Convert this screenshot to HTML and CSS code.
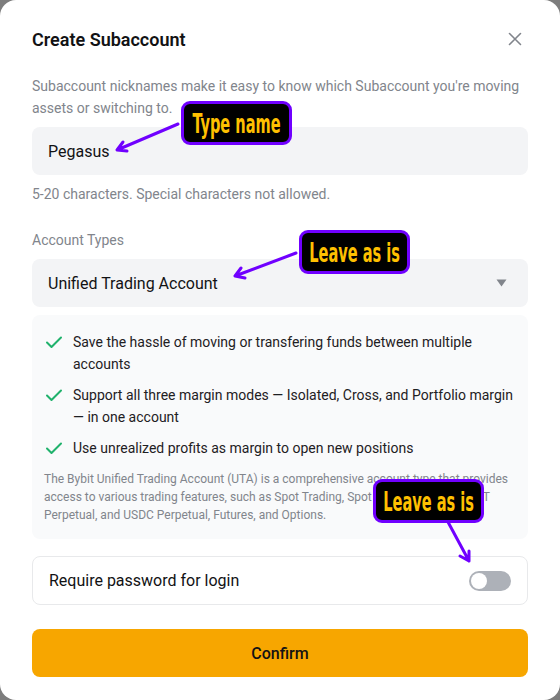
FILE: index.html
```html
<!DOCTYPE html>
<html lang="en">
<head>
    <meta charset="UTF-8">
    <meta name="viewport" content="width=device-width, initial-scale=1.0">
    <title>Create Subaccount</title>
    <link rel="stylesheet" href="styles.css">
</head>
<body>

<div class="modal">
    <div class="modal-head">
        <h2>Create Subaccount</h2>
        <svg class="close" width="14" height="14" viewBox="0 0 14 14">
            <path d="M1.5 1.5 L12.5 12.5 M12.5 1.5 L1.5 12.5" stroke="#81858c" stroke-width="1.6" stroke-linecap="round"/>
        </svg>
    </div>

    <p class="desc">Subaccount nicknames make it easy to know which Subaccount you're moving assets or switching to.</p>

    <div class="field">Pegasus</div>
    <p class="hint">5-20 characters. Special characters not allowed.</p>

    <p class="label">Account Types</p>
    <div class="field select">
        <span>Unified Trading Account</span>
        <svg width="11" height="8" viewBox="0 0 11 8">
            <path d="M0.5 0.5 H10.5 L5.5 7.5 Z" fill="#81858c"/>
        </svg>
    </div>

    <div class="info">
        <ul class="perks">
            <li>
                <svg class="check" width="18" height="18" viewBox="0 0 18 18">
                    <path d="M2 9.5 L6.5 14 L16 4.5" fill="none" stroke="#20b26c" stroke-width="2" stroke-linecap="round" stroke-linejoin="round"/>
                </svg>
                <span>Save the hassle of moving or transfering funds between multiple accounts</span>
            </li>
            <li>
                <svg class="check" width="18" height="18" viewBox="0 0 18 18">
                    <path d="M2 9.5 L6.5 14 L16 4.5" fill="none" stroke="#20b26c" stroke-width="2" stroke-linecap="round" stroke-linejoin="round"/>
                </svg>
                <span>Support all three margin modes — Isolated, Cross, and Portfolio margin — in one account</span>
            </li>
            <li>
                <svg class="check" width="18" height="18" viewBox="0 0 18 18">
                    <path d="M2 9.5 L6.5 14 L16 4.5" fill="none" stroke="#20b26c" stroke-width="2" stroke-linecap="round" stroke-linejoin="round"/>
                </svg>
                <span>Use unrealized profits as margin to open new positions</span>
            </li>
        </ul>
        <p class="note">The Bybit Unified Trading Account (UTA) is a comprehensive account type that provides access to various trading features, such as Spot Trading, Spot Margin Trading, USDT Perpetual, and USDC Perpetual, Futures, and Options.</p>
    </div>

    <div class="toggle-row">
        <span>Require password for login</span>
        <div class="switch"><div class="knob"></div></div>
    </div>

    <button class="confirm" type="button">Confirm</button>
</div>

<!-- annotations on top of the screenshot -->
<div class="tag tag-name"><span>Type name</span></div>
<div class="tag tag-type"><span>Leave as is</span></div>
<div class="tag tag-pass"><span>Leave as is</span></div>

<svg class="arrows" width="560" height="700" viewBox="0 0 560 700">
    <g fill="none" stroke="#7000ff" stroke-width="3" stroke-linecap="round" stroke-linejoin="round">
        <path d="M178 124 L117 150 M127 151 L117 150 L123 142"/>
        <path d="M296 253 L235 276 M245 278 L235 276 L241 268"/>
        <path d="M448 522 L469 561 M469 551 L469 561 L460 556"/>
    </g>
</svg>

</body>
</html>
```

FILE: styles.css
```css
body {
    margin: 0;
    background-color: #7d7d7d;
    font-family: Roboto, "Liberation Sans", sans-serif;
    color: #121214;
    position: relative;
}

.modal {
    background-color: #fff;
    border-radius: 16px;
    padding: 24px 32px 23px;
    display: flex;
    flex-direction: column;
}

.modal-head {
    height: 30px;
    display: flex;
    align-items: center;
    justify-content: space-between;
}

.modal-head h2 {
    margin: 0;
    font-size: 18px;
    font-weight: 600;
}

.close {
    margin-right: 6px;
}

.desc, .hint, .label {
    margin: 0;
    font-size: 14px;
    line-height: 22px;
    color: #81858c;
}

.desc {
    margin-top: 21px;
}

.hint {
    margin-top: 8px;
}

.label {
    margin-top: 24px;
}

.field {
    margin-top: 8px;
    height: 48px;
    box-sizing: border-box;
    padding: 0 16px;
    background-color: #f3f4f6;
    border-radius: 8px;
    display: flex;
    align-items: center;
    font-size: 16px;
}

.select {
    justify-content: space-between;
    padding-right: 21px;
}

.info {
    margin-top: 8px;
    background-color: #f9fafb;
    border-radius: 8px;
    padding: 16px 12px 15px;
}

.perks {
    list-style: none;
    margin: 0;
    padding: 0;
    display: flex;
    flex-direction: column;
    gap: 9px;
}

.perks li {
    display: flex;
    gap: 10px;
    font-size: 14px;
    line-height: 22px;
    color: #1e2023;
}

.check {
    flex-shrink: 0;
    margin-top: 2px;
    margin-left: 1px;
}

.note {
    margin: 11px 0 0;
    font-size: 12px;
    line-height: 18px;
    color: #81858c;
}

.toggle-row {
    margin-top: 17px;
    height: 49px;
    box-sizing: border-box;
    border: 1px solid #e8e9eb;
    border-radius: 8px;
    padding: 0 16px;
    display: flex;
    align-items: center;
    justify-content: space-between;
    font-size: 16px;
}

.switch {
    width: 42px;
    height: 20px;
    border-radius: 10px;
    background-color: #adb1b8;
    padding: 2px;
    box-sizing: border-box;
}

.knob {
    width: 16px;
    height: 16px;
    border-radius: 50%;
    background-color: #fff;
}

.confirm {
    margin-top: 24px;
    height: 48px;
    border: none;
    border-radius: 8px;
    background-color: #f7a600;
    color: #121214;
    font-family: inherit;
    font-size: 16px;
    font-weight: 500;
}

/* annotation labels */
.tag {
    position: absolute;
    box-sizing: border-box;
    width: 111px;
    height: 44px;
    background-color: #000;
    border: 3px solid #7000ff;
    border-radius: 9px;
    display: flex;
    align-items: center;
    justify-content: center;
}

.tag span {
    display: inline-block;
    font-family: "DejaVu Sans Condensed", "DejaVu Sans", sans-serif;
    font-weight: bold;
    font-size: 27px;
    color: #ffc000;
    transform: scaleX(0.6);
    white-space: nowrap;
}

.tag-name {
    left: 181px;
    top: 101px;
}

.tag-type {
    left: 299px;
    top: 230px;
}

.tag-pass {
    left: 373px;
    top: 479px;
}

.arrows {
    position: absolute;
    left: 0;
    top: 0;
    pointer-events: none;
}
```
